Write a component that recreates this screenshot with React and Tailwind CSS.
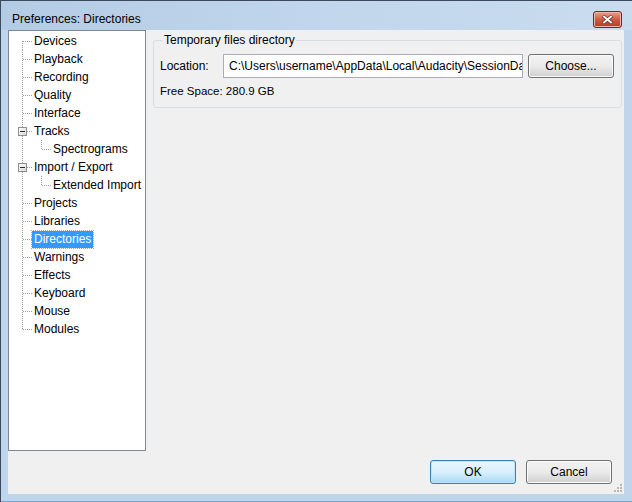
import React from 'react';

const font = { fontFamily: '"Liberation Sans", Arial, sans-serif' };

const items = [
  { label: 'Devices', lvl: 0 },
  { label: 'Playback', lvl: 0 },
  { label: 'Recording', lvl: 0 },
  { label: 'Quality', lvl: 0 },
  { label: 'Interface', lvl: 0 },
  { label: 'Tracks', lvl: 0, open: true },
  { label: 'Spectrograms', lvl: 1 },
  { label: 'Import / Export', lvl: 0, open: true },
  { label: 'Extended Import', lvl: 1 },
  { label: 'Projects', lvl: 0 },
  { label: 'Libraries', lvl: 0 },
  { label: 'Directories', lvl: 0, selected: true },
  { label: 'Warnings', lvl: 0 },
  { label: 'Effects', lvl: 0 },
  { label: 'Keyboard', lvl: 0 },
  { label: 'Mouse', lvl: 0 },
  { label: 'Modules', lvl: 0 },
];

function Gutter({ item, first, last }) {
  const dot = { stroke: '#a0a0a0', strokeWidth: 1, strokeDasharray: '1 1', shapeRendering: 'crispEdges' };
  if (item.lvl === 1) {
    return (
      <svg width="42" height="18" className="shrink-0">
        <line x1="13.5" y1="0" x2="13.5" y2="18" style={dot} />
        <line x1="32.5" y1="0" x2="32.5" y2="10" style={dot} />
        <line x1="33" y1="9.5" x2="42" y2="9.5" style={dot} />
      </svg>
    );
  }
  return (
    <svg width="23" height="18" className="shrink-0">
      <line x1="13.5" y1={first ? 9 : 0} x2="13.5" y2={last ? 10 : 18} style={dot} />
      {item.open ? (
        <>
          <line x1="18" y1="9.5" x2="23" y2="9.5" style={dot} />
          <defs>
            <linearGradient id="bx" x1="0" y1="0" x2="1" y2="1">
              <stop offset="0" stopColor="#ffffff" />
              <stop offset="1" stopColor="#d6d6d6" />
            </linearGradient>
          </defs>
          <rect x="9.5" y="5.5" width="8" height="8" fill="url(#bx)" stroke="#8f8f8f" shapeRendering="crispEdges" />
          <line x1="11" y1="9.5" x2="16" y2="9.5" stroke="#2b2b2b" shapeRendering="crispEdges" />
        </>
      ) : (
        <line x1="14" y1="9.5" x2="23" y2="9.5" style={dot} />
      )}
    </svg>
  );
}

function Btn({ children, primary, className }) {
  return (
    <div
      className={
        'flex items-center justify-center rounded-[3px] border text-[12px] text-black ' +
        (primary
          ? 'border-[#3c7fb1] bg-gradient-to-b from-[#eaf6fd] via-[#d9f0fc] to-[#a7d9f5] shadow-[inset_0_0_0_1px_#bfe4f8] '
          : 'border-[#707070] bg-gradient-to-b from-[#f2f2f2] via-[#ebebeb] to-[#cfcfcf] shadow-[inset_0_0_0_1px_#fbfbfb] ') +
        className
      }
    >
      {children}
    </div>
  );
}

export default function App() {
  return (
    <div style={font} className="flex h-[502px] w-[632px] flex-col overflow-hidden border-l border-t border-[#3b4a5c] bg-[#bfd5ec]">
      <div className="flex h-[29px] shrink-0 items-center justify-between bg-gradient-to-r from-[#b3cbe4] via-[#c1d6ec] to-[#c9dcef] pl-[11px] pr-[10px]">
        <span className="mt-[7px] text-[12px] text-black">Preferences: Directories</span>
        <div className="mt-[8px] flex h-[17px] w-[29px] items-center justify-center rounded-[3px] border border-[#6b2a23] bg-gradient-to-b from-[#e8a18f] via-[#cf5b45] to-[#b23a22] shadow-[inset_0_0_0_1px_#efb7a8]">
          <svg width="11" height="9" viewBox="0 0 11 9">
            <path d="M1 0.8 L10 8.2 M10 0.8 L1 8.2" stroke="#4a1a12" strokeWidth="3.2" />
            <path d="M1.3 1 L9.7 8 M9.7 1 L1.3 8" stroke="#ffffff" strokeWidth="2" />
          </svg>
        </div>
      </div>
      <div className="flex flex-1">
        <div className="w-[7px] shrink-0" />
        <div className="flex h-[464px] w-[616px] flex-col bg-[#f0f0f0]">
          <div className="flex h-[421px]">
            <div className="flex w-[138px] shrink-0 flex-col border border-[#828790] bg-white pt-[1px]">
              {items.map((it, i) => (
                <div key={it.label} className="flex h-[18px] items-center">
                  <Gutter item={it} first={i === 0} last={i === items.length - 1} />
                  <span
                    className={
                      'h-[17px] whitespace-nowrap px-[2px] text-[12px] leading-[17px] ' +
                      (it.selected ? 'bg-[#3399ff] text-white outline outline-1 outline-dotted outline-[#d6a34a]' : 'text-black')
                    }
                  >
                    {it.label}
                  </span>
                </div>
              ))}
            </div>
            <div className="flex-1 pl-[7px] pr-[2px] pt-[3px]">
              <fieldset className="h-[75px] rounded-[3px] border border-[#d5dfe5] px-[6px]">
                <legend className="ml-[3px] px-[1px] text-[12px] leading-[14px] text-black">Temporary files directory</legend>
                <div className="mt-[7px] flex items-center">
                  <span className="w-[63px] text-[12px] text-black">Location:</span>
                  <div className="flex h-[24px] w-[300px] items-center overflow-hidden whitespace-nowrap border border-[#abadb3] bg-white pl-[5px] text-[12px] text-black">
                    C:\Users\username\AppData\Local\Audacity\SessionData
                  </div>
                  <Btn className="ml-[5px] h-[24px] w-[86px]">Choose...</Btn>
                </div>
                <div className="mt-[5px] text-[11.5px] text-black">Free Space: 280.9 GB</div>
              </fieldset>
            </div>
          </div>
          <div className="relative flex flex-1 items-start justify-end gap-[10px] pr-[12px] pt-[9px]">
            <Btn primary className="h-[24px] w-[86px]">OK</Btn>
            <Btn className="h-[24px] w-[86px]">Cancel</Btn>
            <svg width="9" height="9" className="absolute bottom-[2px] right-[2px]">
              {[[7, 1], [7, 4], [4, 4], [7, 7], [4, 7], [1, 7]].map(([x, y]) => (
                <rect key={x + '-' + y} x={x} y={y} width="2" height="2" fill="#b9b9b9" />
              ))}
            </svg>
          </div>
        </div>
        <div className="flex-1" />
      </div>
      <div className="h-[7px] shrink-0" />
      <div className="h-[2px] shrink-0 bg-[#39c1d8]" />
    </div>
  );
}
